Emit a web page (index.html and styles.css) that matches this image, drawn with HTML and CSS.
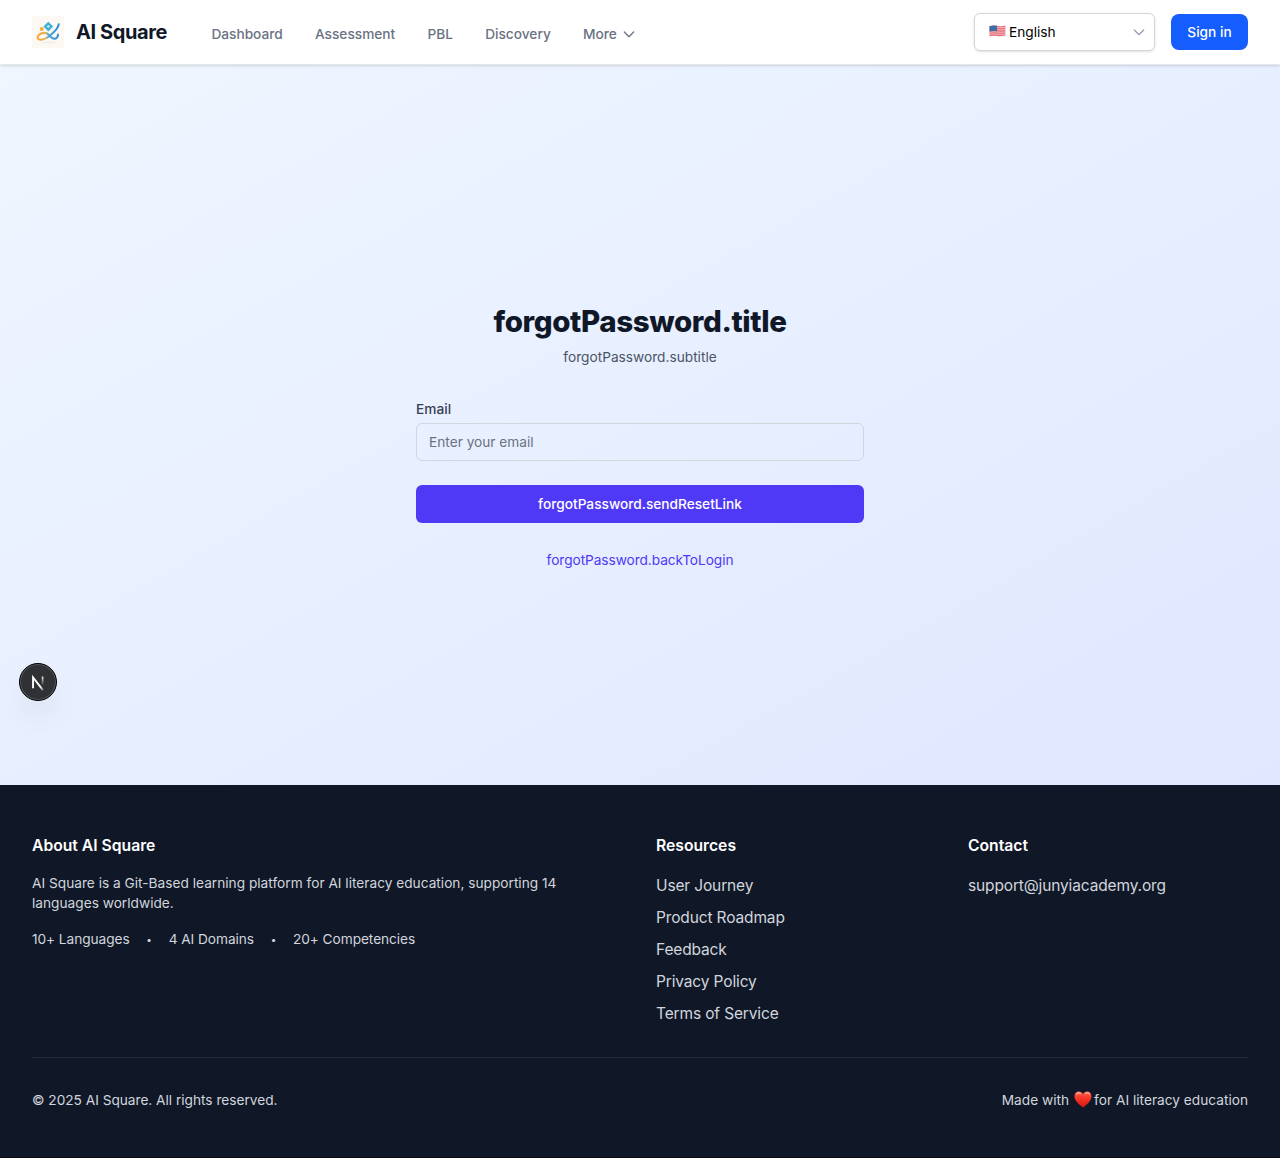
FILE: index.html
```html
<!DOCTYPE html>
<html lang="en">
<head>
<meta charset="utf-8">
<title>AI Square</title>
<link rel="stylesheet" href="styles.css">
</head>
<body>
<header class="header">
  <a class="brand">
    <svg class="logo" viewBox="0 0 32 32" fill="none" stroke-linecap="round">
      <defs>
        <linearGradient id="swoosh" x1="5" y1="0" x2="27" y2="0" gradientUnits="userSpaceOnUse">
          <stop offset="0" stop-color="#f5a43a"/><stop offset=".38" stop-color="#efb552"/><stop offset=".52" stop-color="#4fa9dc"/><stop offset="1" stop-color="#2f8bd8"/>
        </linearGradient>
      </defs>
      <rect width="32" height="32" fill="#fcf8f3"/>
      <ellipse cx="17" cy="26.5" rx="8" ry="1.2" fill="#f3eee8"/>
      <path d="M26.700 8.300C26 13 21.500 16.500 18 19.500C14.800 22 10.500 24.200 7.500 23.600C4.600 22.900 5.200 19.500 8.200 18C11.500 16.300 14.800 16.800 17 19C19 21.400 20.500 23.300 23 22.700C25 22.200 26 20.500 26 18.600" stroke="url(#swoosh)" stroke-width="2"/>
      <circle cx="9.700" cy="12.900" r="2" fill="#f6ab3c"/>
      <path d="M16.300 7.400L19.500 10.500L16.300 13.700L13.100 10.500Z" fill="#d8f0f7" stroke="#42b3d3" stroke-width="2.400"/>
    </svg>
    <span class="brand-name">AI Square</span>
  </a>
  <nav class="nav">
    <a>Dashboard</a><a>Assessment</a><a>PBL</a><a>Discovery</a>
    <a class="more">More
      <svg class="chevron" viewBox="0 0 24 24" fill="none" stroke="currentColor" stroke-width="2" stroke-linecap="round" stroke-linejoin="round"><path d="M19 9l-7 7-7-7"/></svg>
    </a>
  </nav>
  <div class="actions">
    <div class="language">
      <svg class="flag" viewBox="0 0 17 12">
        <path d="M.5 1.200Q4-.1 8 .8T16.300.6V10.600Q12 11.500 8 10.900T.5 11.300Z" fill="#e8707a"/>
        <path d="M8 2.300q4 .7 8.300-.1M8 4.600q4 .7 8.300-.1M1 7.300q4-1 7.500-.3t7.800-.1M1 9.400q4-1 7.500-.3t7.800-.1" fill="none" stroke="#f5c9cc" stroke-width=".8"/>
        <path d="M.5 1.200Q4-.1 8 .8V6.200Q4 5.500.5 6.600Z" fill="#3e6ea8"/>
      </svg>
      <span>English</span>
      <svg class="select-arrow" viewBox="0 0 24 24" fill="none" stroke="currentColor" stroke-width="2" stroke-linecap="round" stroke-linejoin="round"><path d="M19 9l-7 7-7-7"/></svg>
    </div>
    <button class="sign-in">Sign in</button>
  </div>
</header>

<main class="main">
  <form class="reset">
    <h1>forgotPassword.title</h1>
    <p class="subtitle">forgotPassword.subtitle</p>
    <label for="email">Email</label>
    <input id="email" type="email" placeholder="Enter your email">
    <button type="button" class="submit">forgotPassword.sendResetLink</button>
    <a class="back">forgotPassword.backToLogin</a>
  </form>
</main>

<footer class="footer">
  <div class="columns">
    <section class="about">
      <h3>About AI Square</h3>
      <p>AI Square is a Git-Based learning platform for AI literacy education, supporting 14 languages worldwide.</p>
      <div class="stats"><span>10+ Languages</span><span class="dot">•</span><span>4 AI Domains</span><span class="dot">•</span><span>20+ Competencies</span></div>
    </section>
    <section>
      <h3>Resources</h3>
      <ul><li>User Journey</li><li>Product Roadmap</li><li>Feedback</li><li>Privacy Policy</li><li>Terms of Service</li></ul>
    </section>
    <section>
      <h3>Contact</h3>
      <ul><li>support@junyiacademy.org</li></ul>
    </section>
  </div>
  <div class="legal">
    <p class="copyright">© 2025 AI Square. All rights reserved.</p>
    <p class="made"><span>Made with</span>
      <svg class="heart" viewBox="0 0 18 17">
        <defs><linearGradient id="heart" x1="0" y1="0" x2="0" y2="1"><stop offset="0" stop-color="#ff6a55"/><stop offset=".35" stop-color="#fb3a2b"/><stop offset="1" stop-color="#d8170f"/></linearGradient></defs>
        <path d="M9 16.500C6.500 14.300.5 10.500.5 5.200C.5 2.400 2.400.5 4.800.5C6.700.5 8.200 1.500 9 3.100C9.800 1.500 11.300.5 13.200.5C15.600.5 17.500 2.400 17.500 5.200C17.500 10.500 11.500 14.300 9 16.500Z" fill="url(#heart)"/>
        <path d="M2.600 2.900Q4.500 1.200 6.500 2.400M11.400 2.400Q13.500 1.100 15.300 2.800" fill="none" stroke="#ffb6a6" stroke-width="1.100" stroke-linecap="round"/>
      </svg>
      <span>for AI literacy education</span></p>
  </div>
</footer>

<div class="dev-badge">
  <svg viewBox="0 0 40 40" fill="none">
    <defs>
      <linearGradient id="diag" x1="16" y1="17" x2="27" y2="31" gradientUnits="userSpaceOnUse"><stop offset=".6" stop-color="#fff"/><stop offset="1" stop-color="#fff" stop-opacity="0"/></linearGradient>
      <linearGradient id="stem" x1="0" y1="13" x2="0" y2="24" gradientUnits="userSpaceOnUse"><stop stop-color="#fff"/><stop offset="1" stop-color="#fff" stop-opacity="0"/></linearGradient>
    </defs>
    <path d="M14.500 27V15L25.500 29" stroke="url(#diag)" stroke-width="2.100"/>
    <path d="M25.100 14V25" stroke="url(#stem)" stroke-width="1.900"/>
  </svg>
</div>
</body>
</html>
```
FILE: styles.css
```css
* { box-sizing: border-box; margin: 0; padding: 0; }
body { font-family: Inter, "Liberation Sans", sans-serif; font-size: 13.7px; line-height: 20px; color: #101828; background: #0a0a0a; }
h1, h3, a, span, li, label, button { white-space: nowrap; }
button, input { font: inherit; border: 0; }
ul { list-style: none; padding-top: 1px; }

.header { position: relative; height: 65px; padding: 0 32px; display: flex; align-items: center; background: #fff; border-bottom: 1px solid #e5e7eb; box-shadow: 0 1px 3px rgba(0,0,0,.1), 0 1px 2px -1px rgba(0,0,0,.1); }
.brand { display: flex; align-items: center; gap: 12px; width: 179.4px; }
.logo { width: 32px; height: 32px; }
.brand-name { font-size: 20px; line-height: 28px; font-weight: 700; letter-spacing: -.4px; }
.nav { display: flex; gap: 32.2px; padding-top: 4px; color: #6a7282; font-weight: 500; }
.more { display: flex; align-items: center; gap: 4px; }
.chevron { width: 16px; height: 16px; }
.actions { margin-left: auto; display: flex; align-items: center; gap: 16px; }
.language { width: 181px; height: 38px; display: flex; align-items: center; padding: 0 7px 0 13px; border: 1px solid #d1d5dc; border-radius: 6px; color: #000; box-shadow: 0 1px 3px rgba(0,0,0,.1), 0 1px 2px -1px rgba(0,0,0,.1); }
.flag { width: 17px; height: 12px; margin: -3px 3px 0 1px; }
.select-arrow { width: 16px; height: 16px; margin-left: auto; color: #99a1af; }
.sign-in { width: 77px; height: 36px; border-radius: 8px; background: #155dfc; color: #fff; font-weight: 500; }

.main { height: 720px; display: flex; align-items: center; justify-content: center; background: linear-gradient(to bottom right, #eff6ff, #e0e7ff); }
.reset { width: 448px; padding-top: 22px; display: flex; flex-direction: column; }
h1 { font-size: 29.5px; line-height: 36px; font-weight: 800; text-align: center; letter-spacing: -.4px; }
.subtitle { margin-top: 8px; text-align: center; color: #4a5565; }
label { margin-top: 32px; color: #364153; font-weight: 500; }
input { margin-top: 4px; height: 38px; padding: 0 12px; border: 1px solid #d1d5dc; border-radius: 6px; background: transparent; }
input::placeholder { color: #6a7282; opacity: 1; }
.submit { margin-top: 24px; height: 38px; border-radius: 6px; background: #4f39f6; color: #fff; font-weight: 500; }
.back { margin-top: 27px; text-align: center; color: #4f39f6; letter-spacing: -.07px; }

.footer { height: 372px; padding: 48px 32px 0; background: #101828; color: #d1d5dc; }
.columns { display: grid; grid-template-columns: 592px 280px 280px; column-gap: 32px; height: 224px; }
h3 { padding-top: 1px; font-size: 15.7px; line-height: 24px; font-weight: 600; color: #fff; margin-bottom: 15px; }
.about p { width: 560px; }
.stats { display: flex; gap: 16px; margin-top: 16px; letter-spacing: -.06px; }
.dot { width: 7px; font-size: 10px; text-align: center; }
li { font-size: 15.5px; line-height: 24px; margin-bottom: 8px; letter-spacing: -.14px; }
.legal { border-top: 1px solid #1e2939; padding-top: 32px; display: flex; justify-content: space-between; }
.copyright { letter-spacing: -.02px; }
.made { display: flex; }
.heart { width: 18px; height: 17px; margin: 1px 2.5px 0 4.5px; }

.dev-badge { position: absolute; left: 19px; top: 663px; width: 38px; height: 38px; border-radius: 50%; background: #303134; border: 1px solid #000; box-shadow: inset 0 0 0 1px #58595d, 0 16px 32px -8px rgba(0,0,0,.14); }
.dev-badge svg { display: block; width: 36px; height: 36px; }
```
